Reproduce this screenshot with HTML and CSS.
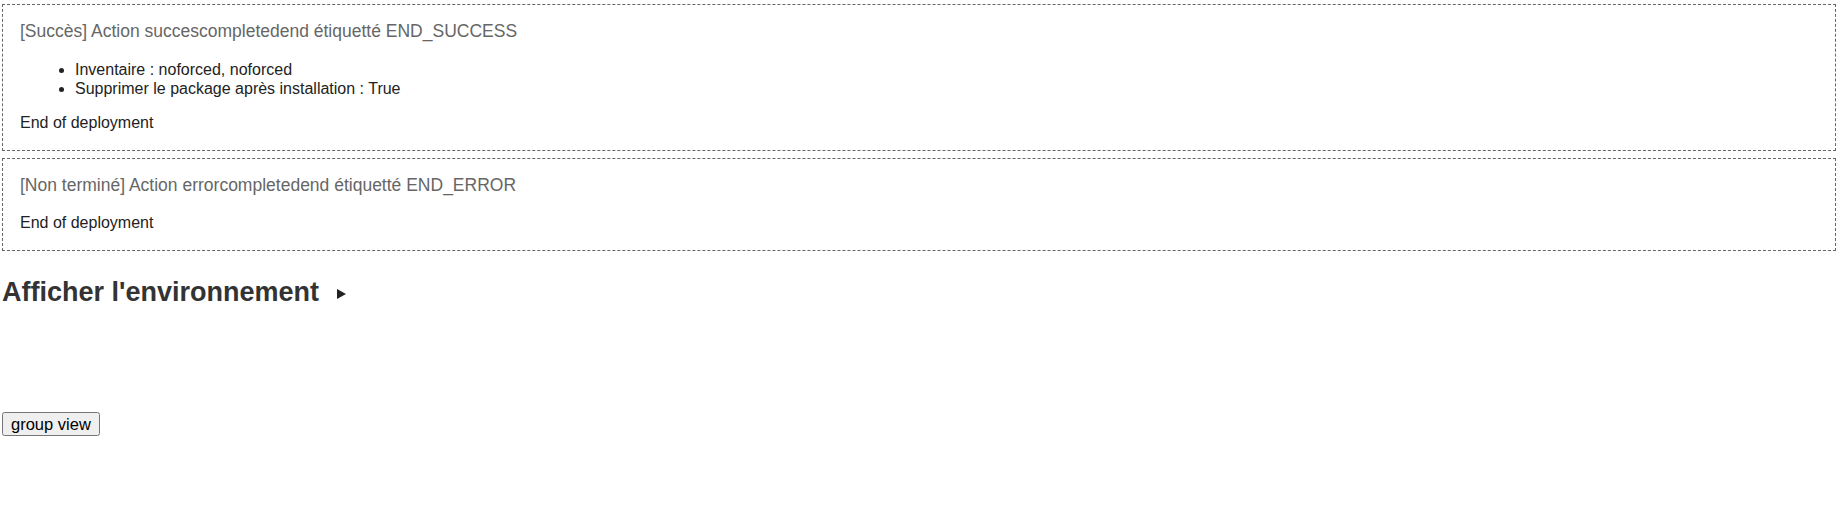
FILE: index.html
```html
<!DOCTYPE html>
<html lang="fr">
<head>
  <meta charset="UTF-8">
  <title>Déploiement</title>
  <link rel="stylesheet" href="styles.css">
</head>
<body>

<!-- Deployment steps -->
<div class="step">
  <div class="step-title">[Succès] Action succescompletedend étiquetté END_SUCCESS</div>
  <ul class="step-options">
    <li>Inventaire : noforced, noforced</li>
    <li>Supprimer le package après installation : True</li>
  </ul>
  <div class="step-msg">End of deployment</div>
</div>

<div class="step">
  <div class="step-title">[Non terminé] Action errorcompletedend étiquetté END_ERROR</div>
  <div class="step-msg">End of deployment</div>
</div>

<h2 class="env-toggle">Afficher l'environnement<span class="arrow"></span></h2>

<div class="actions">
  <button class="group-btn">group view</button>
</div>

</body>
</html>
```

FILE: styles.css
```css
body {
  font-family: 'Liberation Sans', Arial, sans-serif;
  margin: 0 4px 0 2px;
  padding-top: 4px;
  color: #222;
  background-color: #fff;
}

.step {
  border: 1px dashed #666;
  padding: 16px 16px 18px 17px;
  margin-bottom: 7px;
}

.step-title {
  color: #666;
  font-size: 17.5px;
  margin-bottom: 18px;
}

.step-options {
  margin: 2px 0 16px;
  padding-left: 55px;
  font-size: 16px;
  line-height: 19px;
}

.step-msg {
  font-size: 16px;
}

.env-toggle {
  font-size: 27px;
  color: #333;
  margin: 26px 0 0;
}

/* small right arrow next to the heading */
.arrow {
  display: inline-block;
  width: 0;
  height: 0;
  border-top: 5px solid transparent;
  border-bottom: 5px solid transparent;
  border-left: 9px solid #222;
  margin-left: 18px;
  vertical-align: middle;
}

.actions {
  margin-top: 104px;
}

.group-btn {
  font-family: 'Liberation Sans', Arial, sans-serif;
  font-size: 16.5px;
  line-height: 18px;
  padding: 1px 7px;
  margin: 0;
}
```
